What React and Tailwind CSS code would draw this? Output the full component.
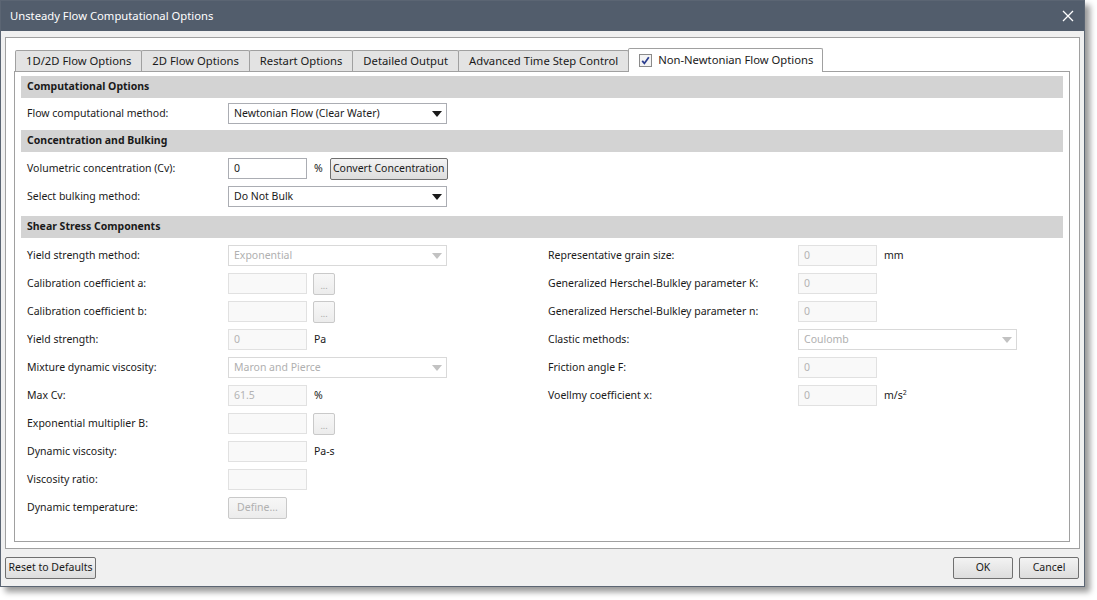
import React from "react";

const font = { fontFamily: '"Noto Sans", "Open Sans", sans-serif' };

const Arrow = ({ disabled }) => (
  <svg width="10" height="6" viewBox="0 0 10 6" className="shrink-0">
    <path d="M0 0 L10 0 L5 6 Z" fill={disabled ? "#c2c2c2" : "#1a1a1a"} />
  </svg>
);

const Select = ({ value, disabled, w = "w-[219px]" }) => (
  <div
    className={`${w} h-[21px] flex items-center justify-between pl-[5px] pr-[4px] border ${
      disabled ? "border-[#d9d9d9] text-[#b0b0b0] bg-white" : "border-[#abadb3] text-[#1a1a1a] bg-white"
    }`}
  >
    <span>{value}</span>
    <Arrow disabled={disabled} />
  </div>
);

const Input = ({ value = "", disabled }) => (
  <div
    className={`w-[79px] h-[21px] shrink-0 flex items-center px-[5px] border ${
      disabled ? "border-[#e1e1e1] bg-[#f9f9f9] text-[#b4b4b4]" : "border-[#abadb3] bg-white text-[#1a1a1a]"
    }`}
  >
    {value}
  </div>
);

const Dots = () => (
  <div className="ml-[6px] w-[22px] h-[22px] border border-[#c9c9c9] rounded-[2px] bg-gradient-to-b from-[#f7f7f7] to-[#ececec] flex items-end justify-center pb-[4px] text-[9px] leading-none text-[#a8a8a8]">
    ...
  </div>
);

const Header = ({ children }) => (
  <div className="h-[22px] bg-[#d3d3d3] flex items-center pl-[6px] font-bold text-[#1a1a1a]">
    {children}
  </div>
);

const Row = ({ label, labelW = "w-[201px]", children, className = "" }) => (
  <div className={`flex items-center h-[21px] pl-[6px] ${className}`}>
    <div className={`${labelW} shrink-0 whitespace-nowrap`}>{label}</div>
    {children}
  </div>
);

const Unit = ({ children }) => <span className="ml-[7px] text-[#1a1a1a] whitespace-nowrap">{children}</span>;

const Tab = ({ children }) => (
  <div className="h-[21px] px-[10px] flex items-center border border-b-0 border-[#a0a0a0] rounded-t-[2px] bg-[#e3e3e3] -ml-px first:ml-0 text-[11.25px] whitespace-nowrap">
    {children}
  </div>
);

const Btn = ({ children, className = "" }) => (
  <div
    className={`h-[22px] flex items-center justify-center whitespace-nowrap border border-[#707070] rounded-[2px] bg-gradient-to-b from-[#f3f3f3] to-[#dddddd] text-[#1a1a1a] ${className}`}
  >
    {children}
  </div>
);

export default function App() {
  const left = [
    { label: "Yield strength method:", el: <Select value="Exponential" disabled /> },
    { label: "Calibration coefficient a:", el: <><Input disabled /><Dots /></> },
    { label: "Calibration coefficient b:", el: <><Input disabled /><Dots /></> },
    { label: "Yield strength:", el: <><Input value="0" disabled /><Unit>Pa</Unit></> },
    { label: "Mixture dynamic viscosity:", el: <Select value="Maron and Pierce" disabled /> },
    { label: "Max Cv:", el: <><Input value="61.5" disabled /><Unit>%</Unit></> },
    { label: "Exponential multiplier B:", el: <><Input disabled /><Dots /></> },
    { label: "Dynamic viscosity:", el: <><Input disabled /><Unit>Pa-s</Unit></> },
    { label: "Viscosity ratio:", el: <Input disabled /> },
    {
      label: "Dynamic temperature:",
      el: (
        <div className="w-[59px] h-[22px] border border-[#c9c9c9] rounded-[2px] bg-gradient-to-b from-[#f7f7f7] to-[#ececec] flex items-center justify-center text-[#b0b0b0]">
          Define...
        </div>
      ),
    },
  ];

  const right = [
    { label: "Representative grain size:", el: <><Input value="0" disabled /><Unit>mm</Unit></> },
    { label: "Generalized Herschel-Bulkley parameter K:", el: <Input value="0" disabled /> },
    { label: "Generalized Herschel-Bulkley parameter n:", el: <Input value="0" disabled /> },
    { label: "Clastic methods:", el: <Select value="Coulomb" disabled /> },
    { label: "Friction angle F:", el: <Input value="0" disabled /> },
    {
      label: "Voellmy coefficient x:",
      el: (
        <>
          <Input value="0" disabled />
          <Unit>
            m/s<sup className="text-[7px]">2</sup>
          </Unit>
        </>
      ),
    },
  ];

  return (
    <div className="w-[1097px] h-[600px] bg-white text-[10.5px] text-[#1a1a1a]" style={font}>
      <div className="w-[1085px] h-[587px] flex flex-col border border-[#5b6573] bg-[#f0f0f0] shadow-[5px_5px_6px_rgba(0,0,0,0.4)]">
        {/* title bar */}
        <div className="h-[30px] shrink-0 bg-[#525d6c] flex items-center justify-between pl-[9px] pr-[10px] text-white text-[11.25px]">
          <span>Unsteady Flow Computational Options</span>
          <svg width="12" height="12" viewBox="0 0 12 12">
            <path d="M1 1 L11 11 M11 1 L1 11" stroke="#ffffff" strokeWidth="1.3" />
          </svg>
        </div>

        <div className="flex-1 px-[4px] pt-[6px] flex flex-col">
          <div className="h-[512px] border border-[#a0a0a0] bg-white pl-[8px] pt-[10px]">
            {/* tabs */}
            <div className="h-[23px] flex items-end pl-px relative z-10">
              <Tab>1D/2D Flow Options</Tab>
              <Tab>2D Flow Options</Tab>
              <Tab>Restart Options</Tab>
              <Tab>Detailed Output</Tab>
              <Tab>Advanced Time Step Control</Tab>
              <div className="h-[24px] -mb-px -ml-px pl-[10px] pr-[9px] flex items-center gap-[6px] border border-b-0 border-[#a0a0a0] rounded-t-[2px] bg-white text-[11.25px] whitespace-nowrap">
                <svg width="13" height="13" viewBox="0 0 13 13">
                  <rect x="0.5" y="0.5" width="12" height="12" fill="#f4f4f4" stroke="#8a8a8a" />
                  <path d="M3.2 6.8 L5.4 9.4 L9.8 3.2" fill="none" stroke="#2b3d8f" strokeWidth="1.8" />
                </svg>
                <span>Non-Newtonian Flow Options</span>
              </div>
            </div>

            {/* content */}
            <div className="w-[1056px] h-[471px] border border-[#a0a0a0] pt-[4px] px-[6px]">
              <Header>Computational Options</Header>
              <Row label="Flow computational method:" className="mt-[5px]">
                <Select value="Newtonian Flow (Clear Water)" />
              </Row>

              <div className="mt-[6px]">
                <Header>Concentration and Bulking</Header>
              </div>
              <Row label="Volumetric concentration (Cv):" className="mt-[6px]">
                <Input value="0" />
                <span className="ml-[7px]">%</span>
                <Btn className="ml-[7px] w-[118px]">Convert Concentration</Btn>
              </Row>
              <Row label="Select bulking method:" className="mt-[7px]">
                <Select value="Do Not Bulk" />
              </Row>

              <div className="mt-[9px]">
                <Header>Shear Stress Components</Header>
              </div>

              <div className="flex mt-[7px]">
                <div className="w-[521px] flex flex-col gap-[7px]">
                  {left.map((r) => (
                    <Row key={r.label} label={r.label}>
                      {r.el}
                    </Row>
                  ))}
                </div>
                <div className="flex flex-col gap-[7px]">
                  {right.map((r) => (
                    <Row key={r.label} label={r.label} labelW="w-[250px]">
                      {r.el}
                    </Row>
                  ))}
                </div>
              </div>
            </div>
          </div>

          {/* footer buttons */}
          <div className="flex items-center mt-[8px]">
            <Btn className="w-[91px]">Reset to Defaults</Btn>
            <div className="flex-1" />
            <Btn className="w-[60px]">OK</Btn>
            <Btn className="w-[60px] ml-[6px] mr-[1px]">Cancel</Btn>
          </div>
        </div>
      </div>
    </div>
  );
}
